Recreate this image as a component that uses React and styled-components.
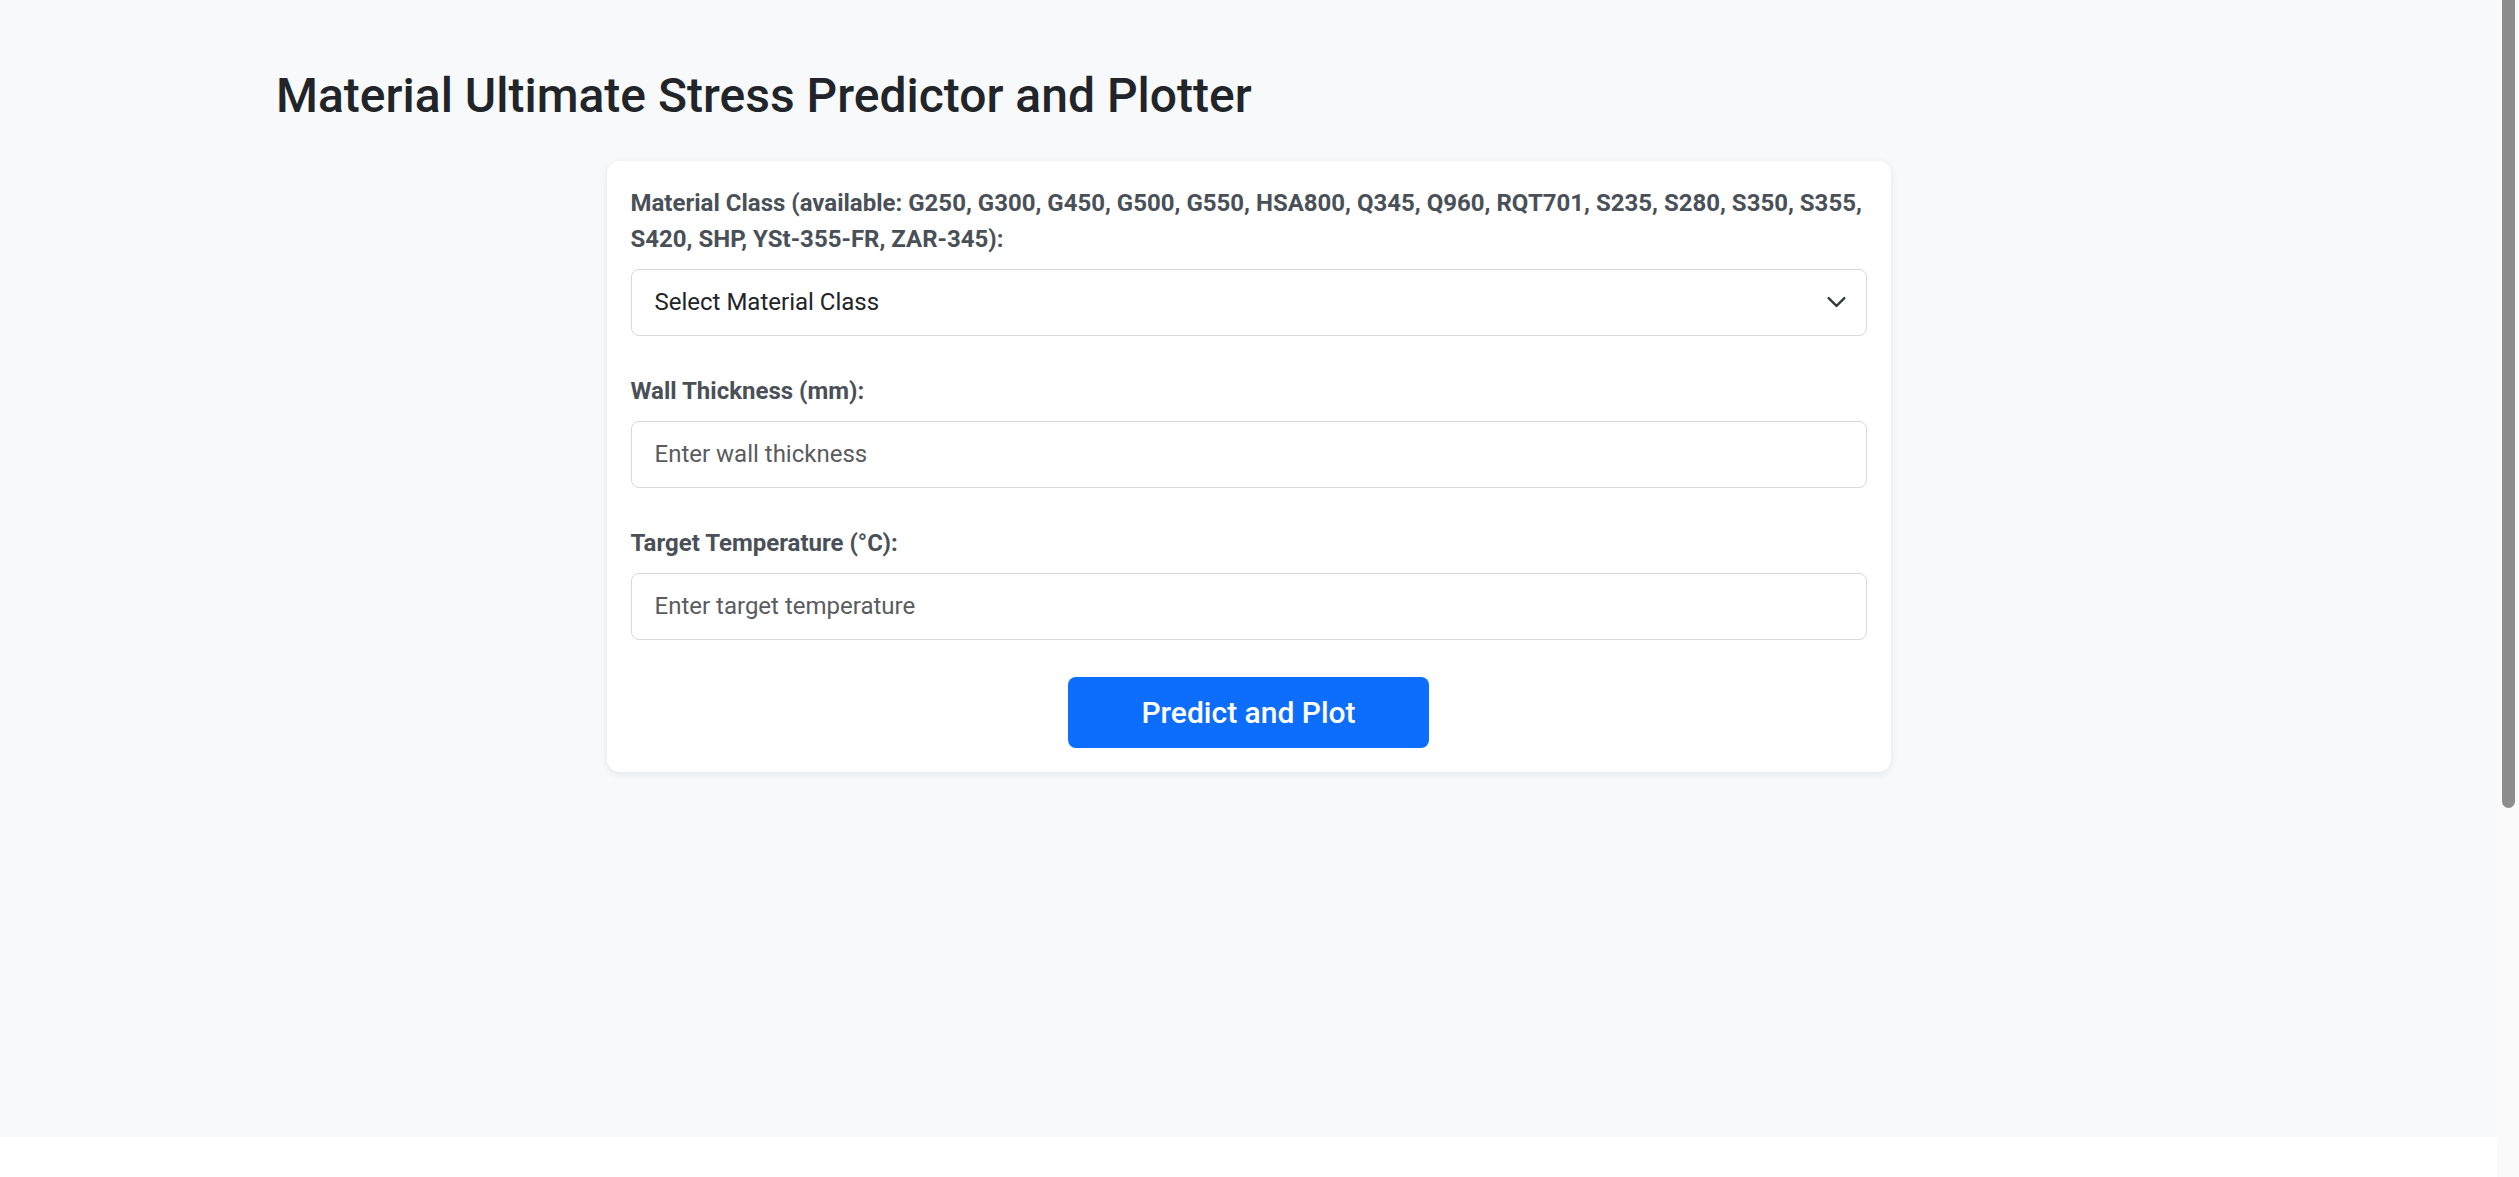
import React, { useState } from 'react';
import styled, { createGlobalStyle } from 'styled-components';

const GlobalStyle = createGlobalStyle`
  html, body {
    margin: 0;
    padding: 0;
    background: #ffffff;
    font-family: Roboto, "Liberation Sans", Arial, sans-serif;
  }

  *, *::before, *::after {
    box-sizing: border-box;
  }
`;

const Shell = styled.div`
  display: flex;
  height: 100vh;
  overflow: hidden;
`;

const Main = styled.main`
  flex: 1;
  min-width: 0;
  overflow-y: auto;
  scrollbar-width: none;
`;

const ScrollRail = styled.div`
  width: 22px;
  flex-shrink: 0;
  background: #fafafa;
  padding: 0 4px 0 5px;
`;

const ScrollThumb = styled.div`
  height: ${(p) => p.$size}px;
  background: #8d8d8d;
  border-radius: 0 0 7px 7px;
`;

const Page = styled.div`
  background: #f8f9fa;
  height: 1137px;
  padding-top: 67px;
`;

const Container = styled.div`
  max-width: 1945px;
  margin: 0 auto;
`;

const Title = styled.h1`
  margin: 0 0 36px;
  font-size: 48px;
  line-height: 57.6px;
  font-weight: 500;
  color: #212529;
`;

const Card = styled.form`
  width: 1284px;
  margin: 0 auto;
  padding: 24px;
  background: #ffffff;
  border-radius: 13px;
  box-shadow: 0 2px 8px rgba(0, 0, 0, 0.08);
`;

const FormItem = styled.div`
  margin-bottom: 37px;
`;

const Label = styled.label`
  display: block;
  margin-bottom: 12px;
  font-size: 24px;
  line-height: 36px;
  font-weight: 700;
  color: #495057;
`;

const fieldStyles = `
  display: block;
  width: 100%;
  height: 67px;
  padding: 0 23px;
  border: 1px solid #d6d9dd;
  border-radius: 8px;
  background: #ffffff;
  font-family: Roboto, "Liberation Sans", Arial, sans-serif;
  font-size: 24px;
  color: #212529;
  outline: none;
`;

const SelectWrap = styled.div`
  position: relative;
`;

const Select = styled.select`
  ${fieldStyles}
  appearance: none;
  -webkit-appearance: none;
  padding-right: 64px;
`;

const Chevron = styled.svg`
  position: absolute;
  right: 20px;
  top: 50%;
  width: 21px;
  height: 21px;
  transform: translateY(-50%);
  pointer-events: none;
`;

const Input = styled.input`
  ${fieldStyles}

  &::placeholder {
    color: #595c5f;
  }
`;

const ButtonRow = styled.div`
  display: flex;
  justify-content: center;
`;

const Button = styled.button`
  width: 361px;
  height: 71px;
  border: none;
  border-radius: 8px;
  background: #0d6efd;
  color: #ffffff;
  font-family: Roboto, "Liberation Sans", Arial, sans-serif;
  font-size: 30px;
  font-weight: 500;
  cursor: pointer;
`;

const PlotArea = styled.div`
  height: 577px;
  background: #ffffff;
`;

const materials = [
  'G250', 'G300', 'G450', 'G500', 'G550', 'HSA800', 'Q345', 'Q960', 'RQT701',
  'S235', 'S280', 'S350', 'S355', 'S420', 'SHP', 'YSt-355-FR', 'ZAR-345',
];

const App = () => {
  const [material, setMaterial] = useState('');
  const [thickness, setThickness] = useState('');
  const [temperature, setTemperature] = useState('');

  return (
    <Shell>
      <GlobalStyle />
      <Main>
        <Page>
          <Container>
            <Title>Material Ultimate Stress Predictor and Plotter</Title>
          </Container>
          <Card onSubmit={(event) => event.preventDefault()}>
            <FormItem>
              <Label>Material Class (available: {materials.join(', ')}):</Label>
              <SelectWrap>
                <Select value={material} onChange={(e) => setMaterial(e.target.value)}>
                  <option value="">Select Material Class</option>
                  {materials.map((m) => (
                    <option key={m} value={m}>{m}</option>
                  ))}
                </Select>
                <Chevron viewBox="0 0 16 16">
                  <path d="m2 5 6 6 6-6" fill="none" stroke="#343a40" strokeWidth="1.8" strokeLinecap="round" strokeLinejoin="round" />
                </Chevron>
              </SelectWrap>
            </FormItem>
            <FormItem>
              <Label>Wall Thickness (mm):</Label>
              <Input
                type="number"
                placeholder="Enter wall thickness"
                value={thickness}
                onChange={(e) => setThickness(e.target.value)}
              />
            </FormItem>
            <FormItem>
              <Label>Target Temperature (°C):</Label>
              <Input
                type="number"
                placeholder="Enter target temperature"
                value={temperature}
                onChange={(e) => setTemperature(e.target.value)}
              />
            </FormItem>
            <ButtonRow>
              <Button type="submit">Predict and Plot</Button>
            </ButtonRow>
          </Card>
        </Page>
        <PlotArea />
      </Main>
      <ScrollRail>
        <ScrollThumb $size={808} />
      </ScrollRail>
    </Shell>
  );
};

export default App;
